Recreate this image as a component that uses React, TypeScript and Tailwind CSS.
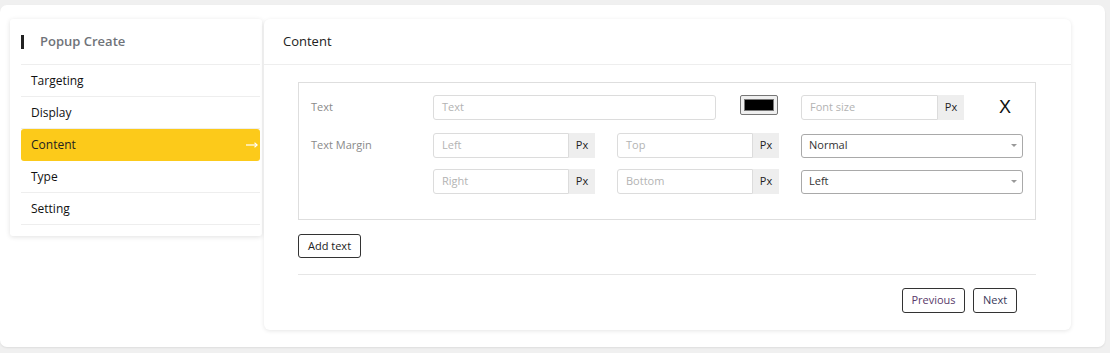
import React from "react";

const font = { fontFamily: '"Open Sans", "Liberation Sans", sans-serif' };

function PxInput({ placeholder, w }: { placeholder: string; w: string }) {
  return (
    <div className="flex h-[25px]">
      <div className={`${w} h-full border border-[#dcdcdc] rounded-l-[3px] flex items-center pl-[8px] text-[11px] text-[#b3b3b3]`}>
        {placeholder}
      </div>
      <div className="w-[26px] h-full bg-[#eeeeee] flex items-center justify-center text-[11px] text-[#222]">Px</div>
    </div>
  );
}

function Select({ value }: { value: string }) {
  return (
    <div className="w-[222px] h-[24px] border border-[#a9a9a9] rounded-[3px] flex items-center justify-between pl-[7px] pr-[5px] text-[11px] text-[#333]">
      <span>{value}</span>
      <span className="w-0 h-0 border-l-[3px] border-r-[3px] border-t-[3px] border-l-transparent border-r-transparent border-t-[#999]" />
    </div>
  );
}

export default function App() {
  const items = ["Targeting", "Display", "Content", "Type", "Setting"];
  return (
    <div className="w-[1110px] h-[353px] bg-[#f0f0f0] pt-[5px]" style={font}>
      <div className="w-[1105px] h-[342px] bg-white rounded-[7px] shadow-[0_1px_2px_rgba(0,0,0,0.08)] flex items-start pl-[10px] pt-[14px]">
        {/* Sidebar */}
        <div className="w-[252px] bg-white rounded-[3px] shadow-[0_1px_5px_rgba(0,0,0,0.12)] pl-[11px] pr-[2px] pb-[11px]">
          <div className="h-[46px] flex items-center border-b border-[#eeeeee]">
            <span className="w-[3px] h-[14px] bg-[#222]" />
            <span className="ml-[16px] text-[13px] font-semibold text-[#6f7379]">Popup Create</span>
          </div>
          {items.map((it) => (
            <div
              key={it}
              className={
                it === "Content"
                  ? "h-[32px] bg-[#fcca1a] rounded-[3px] flex items-center justify-between pl-[10px] pr-[2px] text-[12px] text-[#222]"
                  : "h-[32px] border-b border-[#eeeeee] flex items-center pl-[10px] text-[12px] text-[#111]"
              }
            >
              <span>{it}</span>
              {it === "Content" && (
                <svg width="12" height="6" viewBox="0 0 12 6" className="mr-[0px]">
                  <line x1="0" y1="3" x2="11" y2="3" stroke="white" strokeWidth="1.2" />
                  <path d="M8.5 0.8 L11.2 3 L8.5 5.2" fill="none" stroke="white" strokeWidth="1.1" />
                </svg>
              )}
            </div>
          ))}
        </div>

        {/* Main */}
        <div className="ml-[2px] w-[807px] h-[311px] bg-white rounded-[6px] shadow-[0_1px_4px_rgba(0,0,0,0.1)]">
          <div className="h-[46px] flex items-center pl-[19px] border-b border-[#eeeeee] text-[13px] text-[#222]">Content</div>
          <div className="pl-[34px] pr-[35px] pt-[17px]">
            <div className="h-[138px] border border-[#dedede] pl-[12px] pt-[12px]">
              {/* Row 1 */}
              <div className="flex items-center h-[25px]">
                <div className="w-[122px] text-[11px] text-[#8a8a8a]">Text</div>
                <div className="w-[283px] h-[25px] border border-[#dcdcdc] rounded-[3px] flex items-center pl-[8px] text-[11px] text-[#b3b3b3]">Text</div>
                <div className="ml-[24px] w-[38px] h-[20px] border border-[#767676] rounded-[2px] bg-[#efefef] p-[3px] -mt-[5px]">
                  <div className="w-full h-full bg-black border border-[#777]" />
                </div>
                <div className="ml-[23px]">
                  <PxInput placeholder="Font size" w="w-[137px]" />
                </div>
                <div className="ml-[35px] text-[18px] leading-none text-[#111] -mt-[1px]" style={{ fontFamily: '"Liberation Sans", sans-serif' }}>X</div>
              </div>
              {/* Row 2 */}
              <div className="flex items-center mt-[13px]">
                <div className="w-[122px] text-[11px] text-[#8a8a8a]">Text Margin</div>
                <PxInput placeholder="Left" w="w-[136px]" />
                <div className="ml-[22px]">
                  <PxInput placeholder="Top" w="w-[136px]" />
                </div>
                <div className="ml-[22px]">
                  <Select value="Normal" />
                </div>
              </div>
              {/* Row 3 */}
              <div className="flex items-center mt-[11px]">
                <div className="w-[122px]" />
                <PxInput placeholder="Right" w="w-[136px]" />
                <div className="ml-[22px]">
                  <PxInput placeholder="Bottom" w="w-[136px]" />
                </div>
                <div className="ml-[22px]">
                  <Select value="Left" />
                </div>
              </div>
            </div>
            <button className="mt-[14px] h-[24px] px-[9px] border border-[#333] rounded-[3px] text-[11px] text-[#222]">Add text</button>
            <div className="mt-[16px] border-t border-[#e6e6e6]" />
            <div className="flex justify-end gap-[8px] pr-[19px] mt-[13px]">
              <button className="h-[25px] w-[63px] border border-[#333] rounded-[3px] text-[11px] text-[#5a3a6a]">Previous</button>
              <button className="h-[25px] w-[44px] border border-[#333] rounded-[3px] text-[11px] text-[#3a3a5a]">Next</button>
            </div>
          </div>
        </div>
      </div>
    </div>
  );
}
